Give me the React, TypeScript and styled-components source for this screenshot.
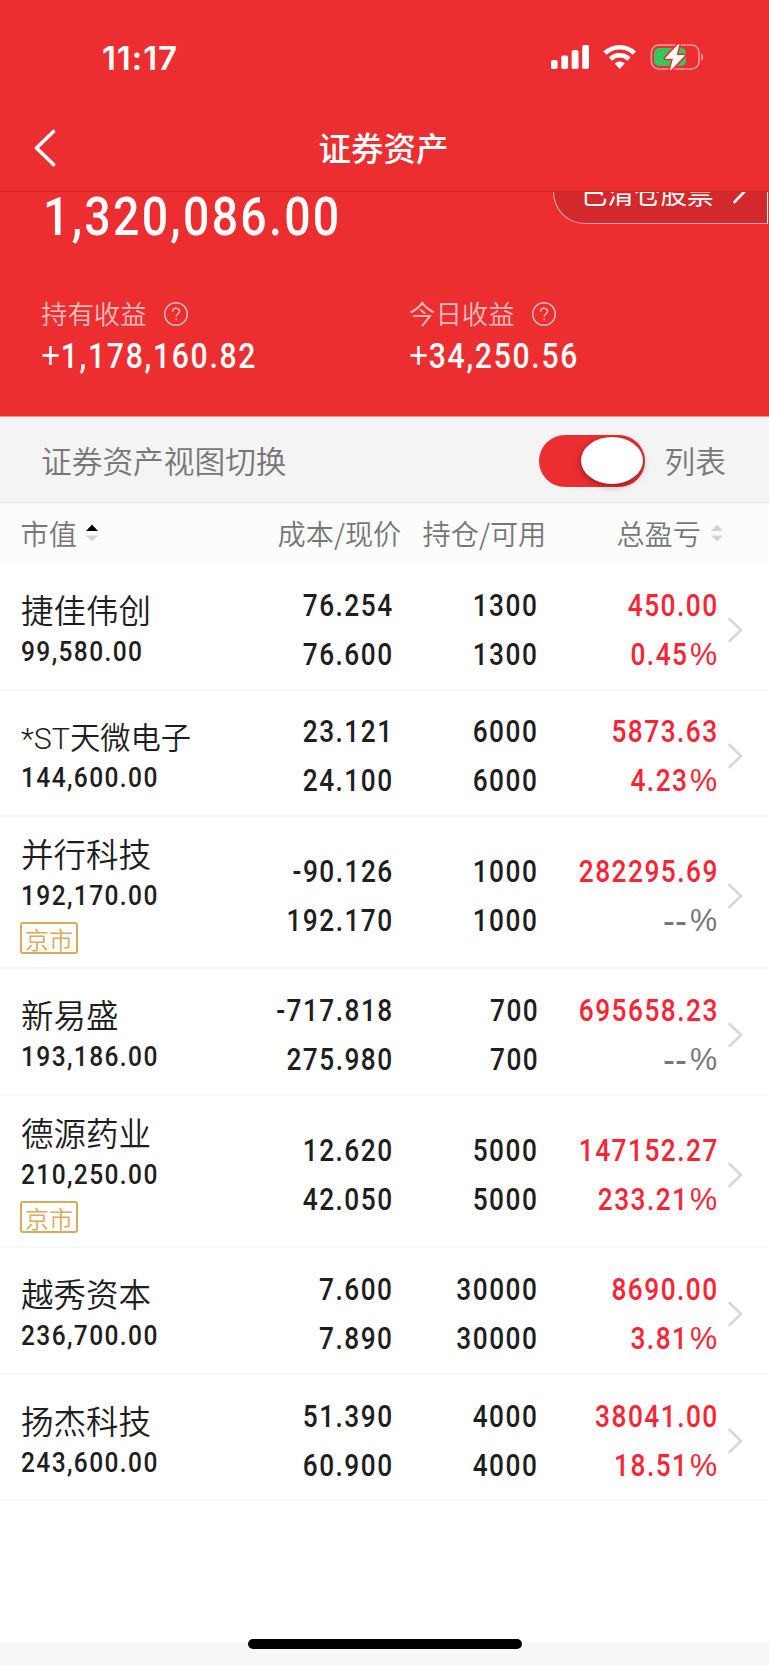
import React from "react";
import styled, { createGlobalStyle } from "styled-components";

const cjk = `"Noto Sans CJK SC", sans-serif`;

const GlobalStyle = createGlobalStyle`
  * { box-sizing: border-box; }
  body { margin: 0; background: #fff; font-family: "Liberation Sans", ${cjk}; }
`;

const Screen = styled.div`
  width: 769px;
  height: 1665px;
  display: flex;
  flex-direction: column;
  overflow: hidden;
  background: #fff;
`;

const Top = styled.header`
  position: relative;
  z-index: 1;
  height: 192px;
  flex: none;
  background: #ed2e31;
  border-bottom: 1px solid #c4292c;
  color: #fff;
`;

const StatusBar = styled.div`
  height: 107px;
  padding: 7px 64px 0 102px;
  display: flex;
  align-items: center;
  justify-content: space-between;
`;

const Clock = styled.span`
  padding-top: 2px;
  font: 600 33px/40px Inter, sans-serif;
  letter-spacing: 0.9px;
`;

const StatusIcons = styled.svg`
  display: block;
  width: 156px;
  height: 30px;
`;

const NavBar = styled.nav`
  height: 84px;
  display: grid;
  grid-template-columns: 100px 1fr 100px;
  align-items: center;
`;

const BackIcon = styled.svg`
  width: 24px;
  height: 40px;
  margin-left: 32.5px;
`;

const Title = styled.h1`
  margin: 0 0 4px;
  padding-right: 2px;
  text-align: center;
  font: 500 32.5px/48px ${cjk};
`;

const Summary = styled.section`
  height: 225px;
  flex: none;
  background: #ed2e31;
  border-bottom: 1px solid #f58f90;
  color: #fff;
`;

const TotalRow = styled.div`
  height: 102px;
  display: flex;
  justify-content: space-between;
  align-items: flex-start;
  padding: 0 1px 0 43px;
`;

const Num = styled.span<{ $size: number; $right?: boolean }>`
  display: inline-block;
  font-family: Roboto, sans-serif;
  font-weight: 500;
  font-size: ${(p) => p.$size}px;
  letter-spacing: 0.057em;
  margin-right: ${(p) => (p.$right ? "-0.057em" : "0")};
  white-space: nowrap;
  transform: scaleX(0.86);
  transform-origin: ${(p) => (p.$right ? "right" : "left")} center;
`;

const Plus = styled.span`
  font: 400 38px/42px "Liberation Sans", sans-serif;
  letter-spacing: 0.8px;
`;

const TotalValue = styled(Num)`
  line-height: 50px;
  letter-spacing: 0.049em;
`;

const ClearedPill = styled.div`
  flex: none;
  width: 215px;
  height: 64px;
  margin-top: -32px;
  padding: 1px 20px 0 27px;
  display: flex;
  align-items: center;
  justify-content: space-between;
  border: 1px solid #f7a9aa;
  border-right-color: #fff;
  border-radius: 32px 0 0 32px;
  background: #d3292c;
  font: 400 26.5px/36px ${cjk};
`;

const PillArrow = styled.svg`
  width: 14px;
  height: 26px;
  margin-top: -3px;
`;

const Gains = styled.div`
  display: grid;
  grid-template-columns: 368px 1fr;
  padding-left: 41px;
`;

const GainLabel = styled.div`
  height: 40px;
  display: flex;
  align-items: center;
  gap: 16.5px;
  color: #f9bcbc;
  font: 350 26.4px/36px ${cjk};
`;

const LabelText = styled.span`
  padding-bottom: 3px;
`;

const HelpIcon = styled.svg`
  width: 26px;
  height: 26px;
`;

const GainValue = styled(Num)`
  line-height: 42px;
`;

const ViewSwitch = styled.section`
  height: 86px;
  flex: none;
  display: flex;
  align-items: center;
  padding: 1px 43px 0 41px;
  background: #f4f4f4;
  border-bottom: 1px solid #fbdfe0;
  color: #777;
  font: 350 30.7px/42px ${cjk};
`;

const Toggle = styled.div`
  width: 106px;
  height: 52px;
  margin: 1px 20px 0 auto;
  padding: 2px;
  display: flex;
  justify-content: flex-end;
  border-radius: 26px;
  background: #ed2e31;
`;

const Knob = styled.div`
  width: 62px;
  height: 47px;
  border-radius: 50%;
  background: #fff;
  box-shadow: 0 2px 7px rgba(0, 0, 0, 0.4);
`;

const TableHead = styled.div`
  height: 61px;
  flex: none;
  display: flex;
  align-items: center;
  background: #fcfcfc;
  padding: 0 46px 1px 20.5px;
  color: #777;
  font: 350 28.2px/40px ${cjk};
`;

const HeadCell = styled.div<{ $width?: number; $push?: boolean }>`
  width: ${(p) => (p.$width ? `${p.$width}px` : "auto")};
  margin-left: ${(p) => (p.$push ? "auto" : "0")};
  display: flex;
  align-items: center;
  gap: ${(p) => (p.$push ? 10 : 9)}px;
  white-space: nowrap;
`;

const SortIcon = styled.svg`
  width: 12px;
  height: 18px;
`;

const Row = styled.div<{ $tall: boolean }>`
  height: ${(p) => (p.$tall ? 152.4 : 126.5)}px;
  flex: none;
  display: grid;
  grid-template-columns: 256px 115px 145px 180px 1fr;
  align-items: center;
  padding: 7px 0 0 21px;
  border-bottom: 2px solid #f7f7f7;
  color: #1e1e1e;
`;

const NameCell = styled.div`
  display: flex;
  flex-direction: column;
  align-items: flex-start;
  padding-top: 4px;
`;

const StockName = styled.div<{ $compact: boolean }>`
  font: 350 ${(p) => (p.$compact ? 30.3 : 32.5)}px/39px Roboto, ${cjk};
  white-space: nowrap;
`;

const MarketValue = styled(Num)`
  line-height: 39px;
`;

const MarketTag = styled.div`
  width: 58px;
  height: 32px;
  margin: 7px 0 4px -1px;
  border: 2px solid #d9ab5e;
  border-radius: 3px;
  color: #d9ab5e;
  text-align: center;
  font: 350 24px/30px ${cjk};
`;

const NumberCell = styled.div<{ $color?: string }>`
  display: flex;
  flex-direction: column;
  align-items: flex-end;
  line-height: 49px;
  color: ${(p) => p.$color ?? "inherit"};
`;

const Percent = styled.div<{ $empty: boolean }>`
  display: flex;
  height: 49px;
  color: ${(p) => (p.$empty ? "#777" : "inherit")};
`;

const Dashes = styled.span`
  font-family: "Liberation Sans", sans-serif;
  font-size: 36px;
`;

const PercentSign = styled.span`
  margin-left: 3px;
  font-family: "Liberation Sans", sans-serif;
  font-size: 30.5px;
`;

const Chevron = styled.svg`
  width: 18px;
  height: 28px;
  margin-left: 8.5px;
`;

const Footer = styled.footer`
  height: 22px;
  flex: none;
  margin-top: auto;
  background: #f7f7f7;
  display: flex;
  justify-content: center;
`;

const HomeIndicator = styled.div`
  width: 274px;
  height: 10px;
  margin-top: -4px;
  border-radius: 5px;
  background: #000;
`;

type Holding = {
  name: string;
  value: string;
  cost: string;
  price: string;
  held: string;
  free: string;
  gain: string;
  pct?: string;
  tag?: string;
};

const holdings: Holding[] = [
  { name: "捷佳伟创", value: "99,580.00", cost: "76.254", price: "76.600", held: "1300", free: "1300", gain: "450.00", pct: "0.45" },
  { name: "*ST天微电子", value: "144,600.00", cost: "23.121", price: "24.100", held: "6000", free: "6000", gain: "5873.63", pct: "4.23" },
  { name: "并行科技", value: "192,170.00", cost: "-90.126", price: "192.170", held: "1000", free: "1000", gain: "282295.69", tag: "京市" },
  { name: "新易盛", value: "193,186.00", cost: "-717.818", price: "275.980", held: "700", free: "700", gain: "695658.23" },
  { name: "德源药业", value: "210,250.00", cost: "12.620", price: "42.050", held: "5000", free: "5000", gain: "147152.27", pct: "233.21", tag: "京市" },
  { name: "越秀资本", value: "236,700.00", cost: "7.600", price: "7.890", held: "30000", free: "30000", gain: "8690.00", pct: "3.81" },
  { name: "扬杰科技", value: "243,600.00", cost: "51.390", price: "60.900", held: "4000", free: "4000", gain: "38041.00", pct: "18.51" },
];

const Sort = ({ up = "#d4d4d4" }: { up?: string }) => (
  <SortIcon viewBox="0 0 12 18">
    <path d="M0 7 6 0.5 12 7Z" fill={up} />
    <path d="M0 11.5 6 17.5 12 11.5Z" fill="#d4d4d4" />
  </SortIcon>
);

const Help = () => (
  <HelpIcon viewBox="0 0 26 26" fill="none" stroke="#f9bcbc" strokeWidth="1.4">
    <circle cx="13" cy="13" r="11.3" />
    <path d="M9.5 10.7C9.5 8.5 11 7.3 13 7.3s3.5 1.2 3.5 3.1c0 2.2-3.3 2.6-3.3 5.2" />
    <path d="M13.2 17.6v1.8" />
  </HelpIcon>
);

const Gain = ({ label, value }: { label: string; value: string }) => (
  <div>
    <GainLabel>
      <LabelText>{label}</LabelText>
      <Help />
    </GainLabel>
    <GainValue $size={35}>
      <Plus>+</Plus>
      {value}
    </GainValue>
  </div>
);

export default function App() {
  return (
    <Screen>
      <GlobalStyle />
      <Top>
        <StatusBar>
          <Clock>11:17</Clock>
          <StatusIcons viewBox="0 0 156 30" fill="#fff">
            <rect x="2" y="18" width="6.6" height="9" rx="1.8" />
            <rect x="12.3" y="13.5" width="6.8" height="13.5" rx="1.8" />
            <rect x="22.7" y="8" width="6.8" height="19" rx="1.8" />
            <rect x="33.2" y="3" width="6.8" height="24" rx="1.8" />
            <path d="M70.7 27 65.6 21.6A7.4 7.4 0 0 1 75.8 21.6Z" />
            <g fill="none" stroke="#fff" strokeWidth="4.6">
              <path d="M56 11.2A21.3 21.3 0 0 1 85.4 11.2" />
              <path d="M61.4 17A13.6 13.6 0 0 1 80 17" />
            </g>
            <rect x="102.4" y="3" width="47.6" height="24" rx="7.5" fill="none" stroke="#f79b9c" strokeWidth="1.6" />
            <path d="M152 11.2C154.8 12 154.8 18 152 18.8Z" fill="#f79b9c" />
            <rect x="105" y="6" width="32" height="18" rx="5" fill="#34c759" />
            <path d="M130 2 116.5 16.3H124.5L121.5 28 135.5 13.5H127Z" stroke="#ed2e31" strokeWidth="4" strokeLinejoin="round" />
            <path d="M130 2 116.5 16.3H124.5L121.5 28 135.5 13.5H127Z" stroke="#fff" strokeWidth="1" strokeLinejoin="round" />
          </StatusIcons>
        </StatusBar>
        <NavBar>
          <BackIcon viewBox="0 0 24 40" fill="none" stroke="#fff" strokeWidth="3.6" strokeLinecap="round" strokeLinejoin="round">
            <path d="M20.5 2.5 3.5 19 20.5 35.5" />
          </BackIcon>
          <Title>证券资产</Title>
        </NavBar>
      </Top>

      <Summary>
        <TotalRow>
          <TotalValue $size={54}>1,320,086.00</TotalValue>
          <ClearedPill>
            已清仓股票
            <PillArrow viewBox="0 0 14 26" fill="none" stroke="#fff" strokeWidth="2.6" strokeLinecap="round">
              <path d="M1.5 2 12 13 1.5 24" />
            </PillArrow>
          </ClearedPill>
        </TotalRow>
        <Gains>
          <Gain label="持有收益" value="1,178,160.82" />
          <Gain label="今日收益" value="34,250.56" />
        </Gains>
      </Summary>

      <ViewSwitch>
        证券资产视图切换
        <Toggle>
          <Knob />
        </Toggle>
        列表
      </ViewSwitch>

      <TableHead>
        <HeadCell $width={257}>
          市值
          <Sort up="#000" />
        </HeadCell>
        <HeadCell $width={145}>成本/现价</HeadCell>
        <HeadCell>持仓/可用</HeadCell>
        <HeadCell $push>
          总盈亏
          <Sort />
        </HeadCell>
      </TableHead>

      {holdings.map((h) => (
        <Row key={h.name} $tall={Boolean(h.tag)}>
          <NameCell>
            <StockName $compact={h.name.length > 5}>{h.name}</StockName>
            <MarketValue $size={28.5}>{h.value}</MarketValue>
            {h.tag && <MarketTag>{h.tag}</MarketTag>}
          </NameCell>
          <NumberCell>
            <Num $size={30.5} $right>{h.cost}</Num>
            <Num $size={30.5} $right>{h.price}</Num>
          </NumberCell>
          <NumberCell>
            <Num $size={30.5} $right>{h.held}</Num>
            <Num $size={30.5} $right>{h.free}</Num>
          </NumberCell>
          <NumberCell $color="#fb2334">
            <Num $size={30.5} $right>{h.gain}</Num>
            <Percent $empty={!h.pct}>
              {h.pct ? <Num $size={30.5} $right>{h.pct}</Num> : <Dashes>--</Dashes>}
              <PercentSign>%</PercentSign>
            </Percent>
          </NumberCell>
          <Chevron viewBox="0 0 18 28" fill="none" stroke="#d8d8d8" strokeWidth="2.6" strokeLinecap="round" strokeLinejoin="round">
            <path d="M3.5 3 15 14 3.5 25" />
          </Chevron>
        </Row>
      ))}

      <Footer>
        <HomeIndicator />
      </Footer>
    </Screen>
  );
}
